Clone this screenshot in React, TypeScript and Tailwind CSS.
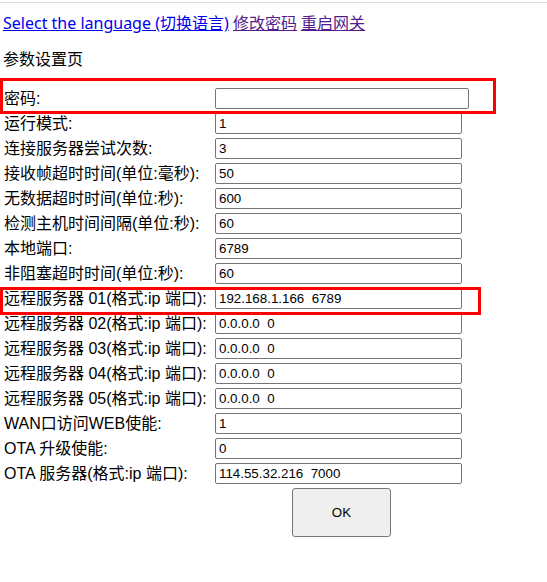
import React from "react";

const rows: { label: string; value: string; password?: boolean }[] = [
  { label: "密码:", value: "", password: true },
  { label: "运行模式:", value: "1" },
  { label: "连接服务器尝试次数:", value: "3" },
  { label: "接收帧超时时间(单位:毫秒):", value: "50" },
  { label: "无数据超时时间(单位:秒):", value: "600" },
  { label: "检测主机时间间隔(单位:秒):", value: "60" },
  { label: "本地端口:", value: "6789" },
  { label: "非阻塞超时时间(单位:秒):", value: "60" },
  { label: "远程服务器 01(格式:ip 端口):", value: "192.168.1.166  6789" },
  { label: "远程服务器 02(格式:ip 端口):", value: "0.0.0.0  0" },
  { label: "远程服务器 03(格式:ip 端口):", value: "0.0.0.0  0" },
  { label: "远程服务器 04(格式:ip 端口):", value: "0.0.0.0  0" },
  { label: "远程服务器 05(格式:ip 端口):", value: "0.0.0.0  0" },
  { label: "WAN口访问WEB使能:", value: "1" },
  { label: "OTA 升级使能:", value: "0" },
  { label: "OTA 服务器(格式:ip 端口):", value: "114.55.32.216  7000" },
];

export default function App() {
  return (
    <div
      className="relative w-[547px] h-[582px] bg-white text-black text-[16px] leading-[20px] overflow-hidden"
      style={{ fontFamily: '"Liberation Sans", "Noto Sans CJK SC", sans-serif' }}
    >
      <div className="h-px bg-[#dcdcdc] mt-[2px]" />
      <div
        className="pl-[3px] mt-[10px] h-[20px] whitespace-nowrap"
        style={{ fontFamily: '"Noto Sans", "Noto Sans CJK SC", sans-serif' }}
      >
        <a href="#" className="text-[#0000ee] underline">Select the language (切换语言)</a>{" "}
        <a href="#" className="text-[#551a8b] underline">修改密码</a>{" "}
        <a href="#" className="text-[#551a8b] underline">重启网关</a>
      </div>
      <div className="pl-[3px] mt-[17px] h-[20px]">参数设置页</div>
      <div className="mt-[16px] flex flex-col">
        {rows.map((r, i) => (
          <div key={i} className="flex items-center h-[25px]">
            <div className="w-[215px] pl-[4px] whitespace-nowrap">{r.label}</div>
            <input
              type={r.password ? "password" : "text"}
              defaultValue={r.value}
              className={`${r.password ? "w-[254px]" : "w-[247px]"} h-[21px] border border-[#767676] rounded-[2px] px-[3px] text-[13.33px] leading-[17px] bg-white text-black outline-none`}
              style={{ fontFamily: '"Liberation Sans", Arial, sans-serif' }}
            />
          </div>
        ))}
        <div className="flex h-[49px] mt-[2px]">
          <button
            className="ml-[292px] w-[99px] h-[49px] bg-[#efefef] border border-[#767676] rounded-[3px] text-[13.33px] text-black"
            style={{ fontFamily: '"Liberation Sans", Arial, sans-serif' }}
          >
            OK
          </button>
        </div>
      </div>
      <div className="absolute left-0 top-[78px] w-[496px] h-[36px] border-[3px] border-[#ff0000] pointer-events-none" />
      <div className="absolute left-0 top-[287px] w-[481px] h-[28px] border-[3px] border-[#ff0000] pointer-events-none" />
    </div>
  );
}
